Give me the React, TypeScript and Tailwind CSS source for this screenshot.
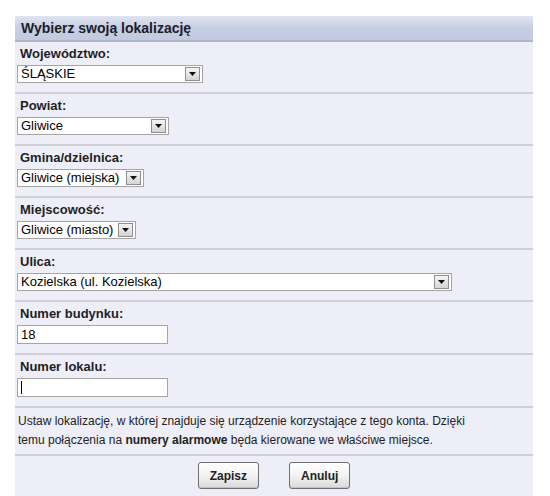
import React from "react";

function Arrow() {
  return (
    <div className="absolute right-[2px] top-[1px] bottom-[1px] w-[15px] border border-[#8e8e8e] bg-gradient-to-b from-[#f4f4f4] to-[#d4d4d4] flex items-center justify-center">
      <svg width="7" height="4" viewBox="0 0 7 4">
        <path d="M0 0H7L3.5 4Z" fill="#111" />
      </svg>
    </div>
  );
}

function Select({ value, width }: { value: string; width: string }) {
  return (
    <div className={`relative h-[18px] bg-white border border-[#a5a5a5] ${width}`}>
      <div className="pl-[3px] text-[13px] leading-[16px] text-black whitespace-nowrap">{value}</div>
      <Arrow />
    </div>
  );
}

function Input({ value, caret }: { value?: string; caret?: boolean }) {
  return (
    <div className="relative h-[19px] w-[151px] bg-white border border-[#a5a5a5] flex items-center">
      {caret ? <div className="ml-[3px] w-[1px] h-[13px] bg-black" /> : null}
      {value ? <div className="pl-[3px] text-[13px] leading-[16px] text-black">{value}</div> : null}
    </div>
  );
}

function Section({ label, children }: { label: string; children: React.ReactNode }) {
  return (
    <div className="pl-[2px] pt-[4px] pb-[9px] border-b-2 border-[#cfcfd5]">
      <div className="pl-[3px] text-[13px] font-bold leading-[16px] h-[16px] text-[#1e1e1e]">{label}</div>
      <div className="mt-[3px]">{children}</div>
    </div>
  );
}

function Btn({ children }: { children: React.ReactNode }) {
  return (
    <div className="h-[27px] px-[11px] flex items-center border border-[#6f6f6f] rounded-[3px] bg-gradient-to-b from-white via-[#f3f3f3] to-[#d9d9d9] text-[12px] font-bold text-[#222] shadow-[inset_0_-1px_0_#c4c4c4]">
      {children}
    </div>
  );
}

export default function App() {
  return (
    <div className="min-h-[496px] bg-white pt-4 pl-[15px]" style={{ fontFamily: '"Liberation Sans", Arial, sans-serif' }}>
      <div className="w-[518px] bg-[#eeeef8]">
        <div className="h-[26px] bg-gradient-to-b from-[#e1e5f0] via-[#c6cee3] to-[#c2cae0] border-b-2 border-[#b0b6c6] flex items-center pl-[6px] pt-[1px] text-[14px] font-bold text-[#1c1c2a]">
          Wybierz swoją lokalizację
        </div>
        <Section label="Województwo:">
          <Select value="ŚLĄSKIE" width="w-[186px]" />
        </Section>
        <Section label="Powiat:">
          <Select value="Gliwice" width="w-[152px]" />
        </Section>
        <Section label="Gmina/dzielnica:">
          <Select value="Gliwice (miejska)" width="w-[127px]" />
        </Section>
        <Section label="Miejscowość:">
          <Select value="Gliwice (miasto)" width="w-[119px]" />
        </Section>
        <Section label="Ulica:">
          <Select value="Kozielska (ul. Kozielska)" width="w-[435px]" />
        </Section>
        <Section label="Numer budynku:">
          <Input value="18" />
        </Section>
        <Section label="Numer lokalu:">
          <Input caret />
        </Section>
        <div className="pl-[3px] pt-[4px] pb-[4px] border-b-2 border-[#cfcfd5] text-[12px] leading-[19px] text-[#222]">
          Ustaw lokalizację, w której znajduje się urządzenie korzystające z tego konta. Dzięki
          <br />
          temu połączenia na <b>numery alarmowe</b> będa kierowane we właściwe miejsce.
        </div>
        <div className="pt-[6px] pb-[8px] border-b-2 border-[#cfcfd5] flex justify-center gap-[30px]">
          <Btn>Zapisz</Btn>
          <Btn>Anuluj</Btn>
        </div>
      </div>
    </div>
  );
}
